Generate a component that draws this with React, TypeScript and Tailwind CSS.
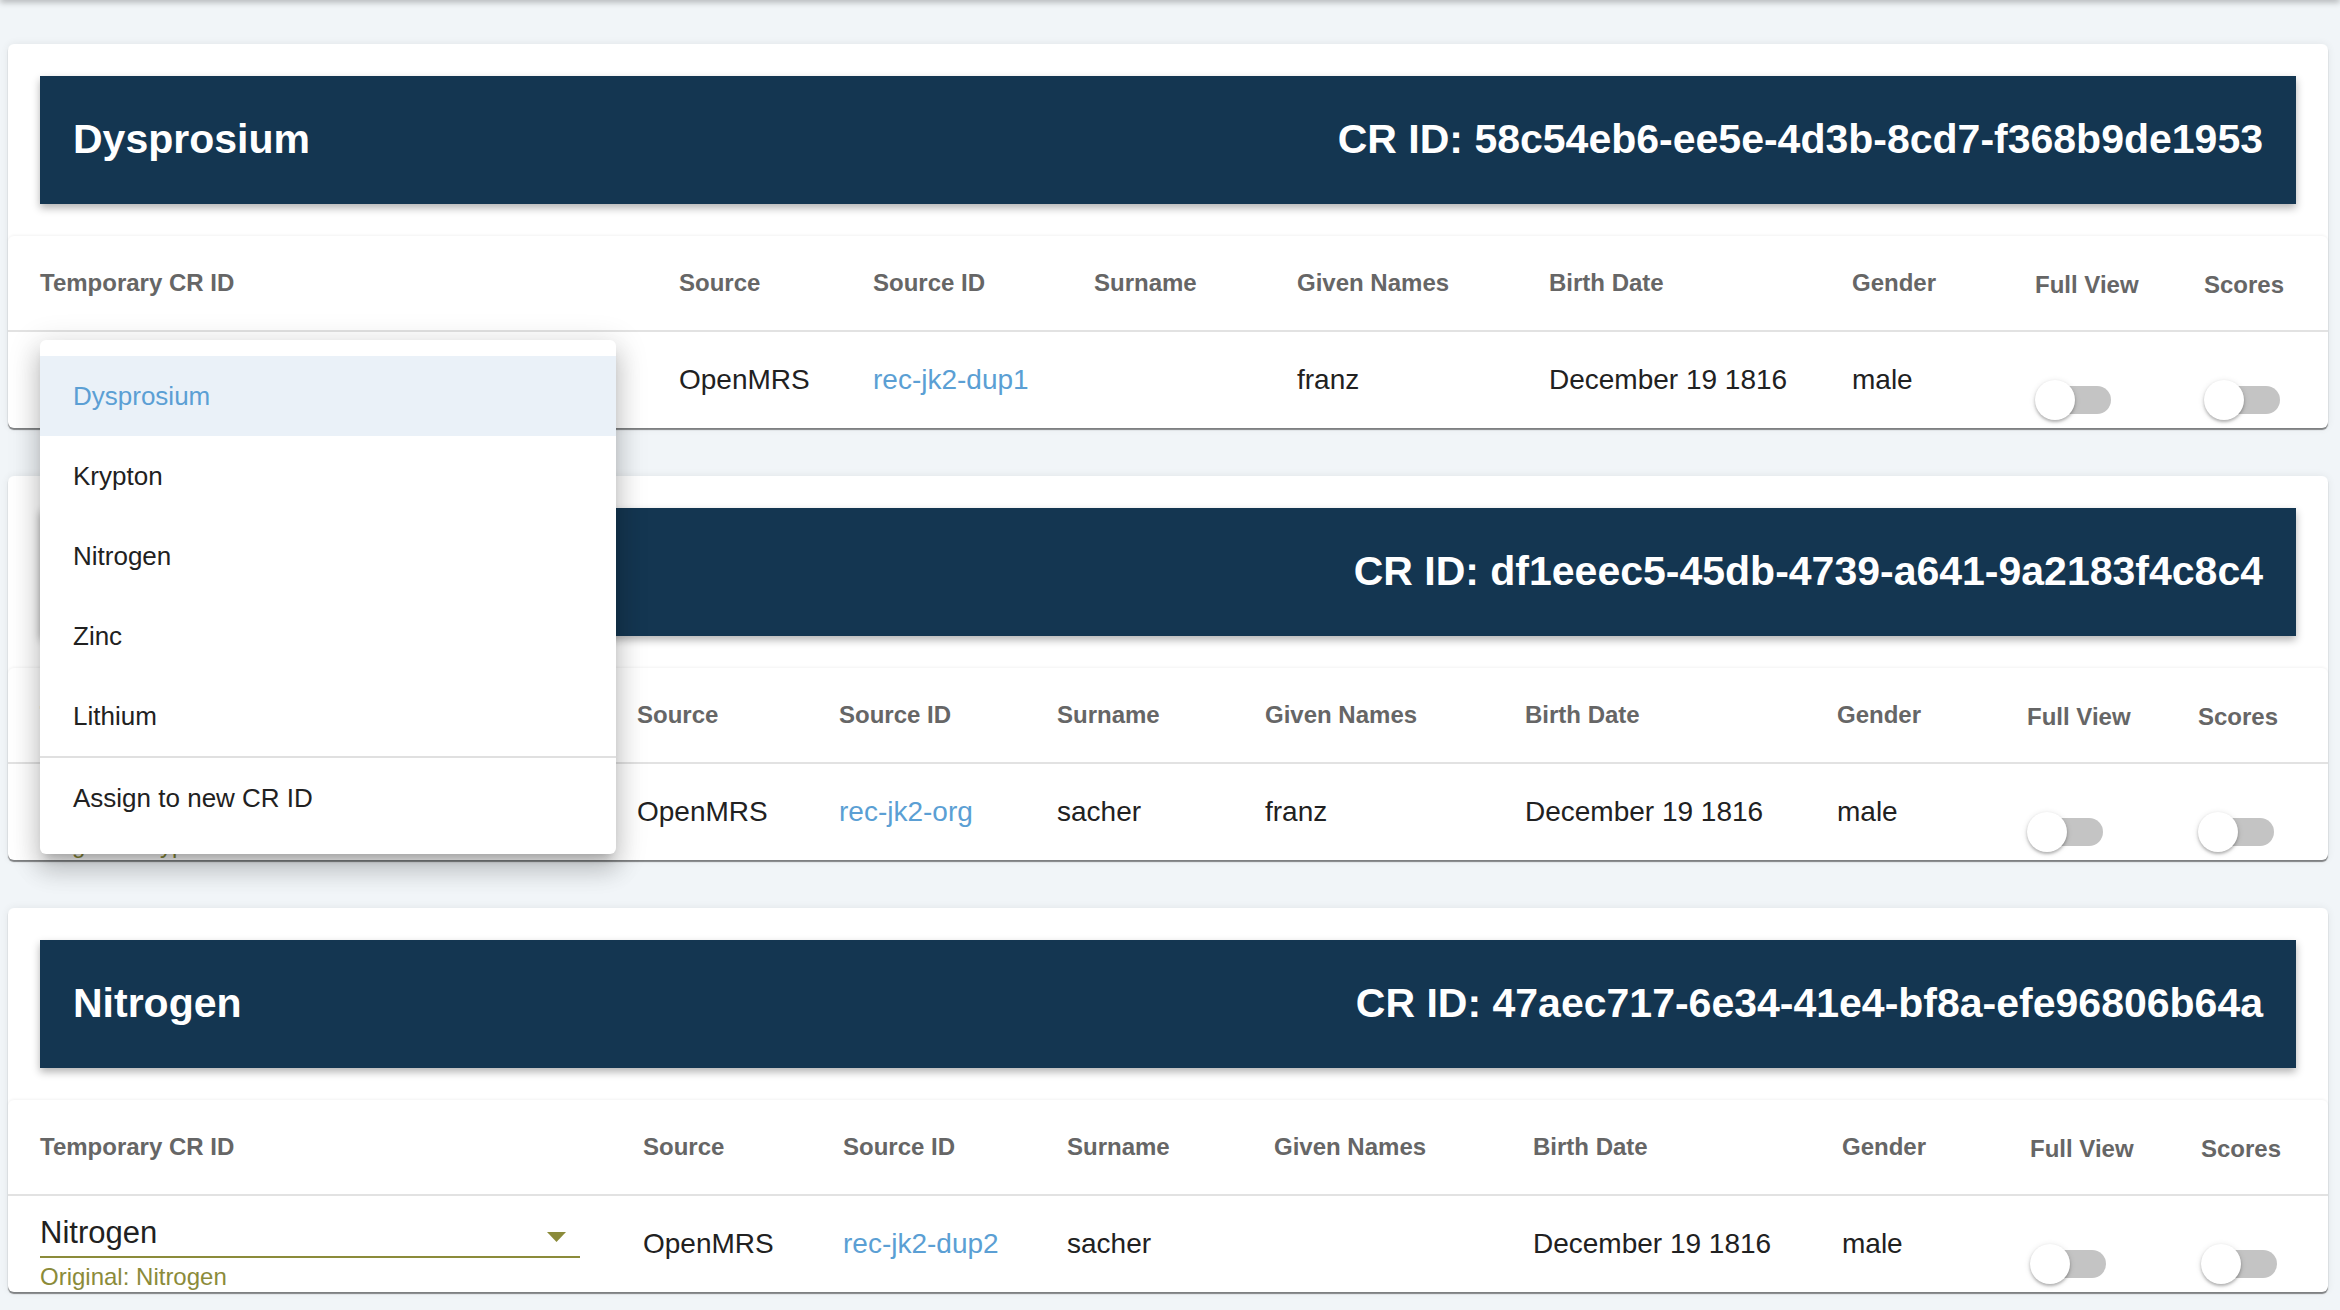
import React from 'react';

type Rec = {
  title: string;
  crId: string;
  cols: string;
  selectW: string;
  value: string;
  original: string;
  source: string;
  sourceId: string;
  surname: string;
  given: string;
  birth: string;
  gender: string;
};

const records: Rec[] = [
  {
    title: 'Dysprosium',
    crId: '58c54eb6-ee5e-4d3b-8cd7-f368b9de1953',
    cols: 'grid-cols-[639px_194px_221px_203px_252px_303px_183px_169px_1fr]',
    selectW: 'w-[576px]',
    value: 'Dysprosium',
    original: 'Dysprosium',
    source: 'OpenMRS',
    sourceId: 'rec-jk2-dup1',
    surname: '',
    given: 'franz',
    birth: 'December 19 1816',
    gender: 'male',
  },
  {
    title: 'Krypton',
    crId: 'df1eeec5-45db-4739-a641-9a2183f4c8c4',
    cols: 'grid-cols-[597px_202px_218px_208px_260px_312px_190px_171px_1fr]',
    selectW: 'w-[534px]',
    value: 'Krypton',
    original: 'Krypton',
    source: 'OpenMRS',
    sourceId: 'rec-jk2-org',
    surname: 'sacher',
    given: 'franz',
    birth: 'December 19 1816',
    gender: 'male',
  },
  {
    title: 'Nitrogen',
    crId: '47aec717-6e34-41e4-bf8a-efe96806b64a',
    cols: 'grid-cols-[603px_200px_224px_207px_259px_309px_188px_171px_1fr]',
    selectW: 'w-[540px]',
    value: 'Nitrogen',
    original: 'Nitrogen',
    source: 'OpenMRS',
    sourceId: 'rec-jk2-dup2',
    surname: 'sacher',
    given: '',
    birth: 'December 19 1816',
    gender: 'male',
  },
];

const headers = ['Temporary CR ID', 'Source', 'Source ID', 'Surname', 'Given Names', 'Birth Date', 'Gender', 'Full View', 'Scores'];

const menuItems = ['Dysprosium', 'Krypton', 'Nitrogen', 'Zinc', 'Lithium'];

function Toggle() {
  return (
    <div className="relative w-[76px] h-[40px] mt-[40px]">
      <div className="absolute left-[8px] top-[6px] w-[68px] h-[28px] rounded-full bg-[#c4c4c4]" />
      <div className="absolute left-0 top-0 w-[40px] h-[40px] rounded-full bg-white shadow-[0_2px_3px_rgba(0,0,0,0.25),0_1px_6px_rgba(0,0,0,0.12)]" />
    </div>
  );
}

function CrSelect({ rec }: { rec: Rec }) {
  return (
    <div className={`${rec.selectW} flex flex-col`}>
      <div className="flex items-center justify-between border-b-2 border-[#8b8b3a] pb-[5px] pr-[14px]">
        <span className="text-[31px] leading-[36px] text-[#212121]">{rec.value}</span>
        <svg width="19" height="10" viewBox="0 0 19 10" className="mt-[8px]">
          <path d="M0 0 L19 0 L9.5 10 Z" fill="#8b8b3a" />
        </svg>
      </div>
      <span className="mt-[5px] text-[24px] leading-[28px] text-[#8b8b3a]">Original: {rec.original}</span>
    </div>
  );
}

function RecordCard({ rec }: { rec: Rec }) {
  return (
    <div className="bg-white rounded-[6px] pt-[32px] shadow-[0_0_8px_rgba(0,0,0,0.07),0_2px_1px_rgba(0,0,0,0.45)]">
      <div className="mx-[32px] h-[128px] bg-[#143651] flex items-center justify-between px-[33px] text-white text-[41px] font-bold shadow-[0_4px_8px_rgba(0,0,0,0.3)]">
        <span>{rec.title}</span>
        <span>CR ID: {rec.crId}</span>
      </div>
      <div className="mt-[32px] rounded-t-[6px] shadow-[0_-1px_3px_rgba(0,0,0,0.05)]">
        <div className={`grid ${rec.cols} items-center h-[96px] pl-[32px] border-b-2 border-[#e2e2e2] text-[24px] font-bold text-[#666666]`}>
          {headers.map((h) => (
            <div key={h} className={h === 'Full View' || h === 'Scores' ? 'mt-[3px]' : ''}>
              {h}
            </div>
          ))}
        </div>
        <div className={`grid ${rec.cols} items-center h-[96px] pl-[32px] text-[28px] text-[#212121]`}>
          <div className="self-stretch flex flex-col justify-end pb-[1px]">
            <CrSelect rec={rec} />
          </div>
          <div>{rec.source}</div>
          <div className="text-[#5b9fd4]">{rec.sourceId}</div>
          <div>{rec.surname}</div>
          <div>{rec.given}</div>
          <div>{rec.birth}</div>
          <div>{rec.gender}</div>
          <div>
            <Toggle />
          </div>
          <div>
            <Toggle />
          </div>
        </div>
      </div>
    </div>
  );
}

export default function App() {
  return (
    <div className="relative min-h-screen overflow-hidden bg-[#f1f5f8] font-['Liberation_Sans',Arial,sans-serif]">
      {/* bottom edge of the card above */}
      <div className="-mt-[6px] h-[6px] bg-white shadow-[0_2px_6px_rgba(0,0,0,0.3)]" />

      <div className="flex flex-col gap-[48px] pl-[8px] pr-[12px] pt-[44px] pb-[40px]">
        {records.map((r) => (
          <RecordCard key={r.crId} rec={r} />
        ))}
      </div>

      {/* open select menu */}
      <div className="absolute left-[40px] top-[340px] z-10 w-[576px] bg-white rounded-[6px] py-[16px] shadow-[0_8px_10px_-5px_rgba(0,0,0,0.2),0_16px_24px_2px_rgba(0,0,0,0.14),0_6px_30px_5px_rgba(0,0,0,0.12)]">
        {menuItems.map((m, i) => (
          <div
            key={m}
            className={
              i === 0
                ? 'h-[80px] flex items-center px-[33px] text-[26px] bg-[#eaf1f8] text-[#5b9fd4]'
                : 'h-[80px] flex items-center px-[33px] text-[26px] text-[#212121]'
            }
          >
            {m}
          </div>
        ))}
        <div className="h-[2px] bg-[#e0e0e0]" />
        <div className="h-[80px] flex items-center px-[33px] text-[26px] text-[#212121]">Assign to new CR ID</div>
      </div>
    </div>
  );
}
